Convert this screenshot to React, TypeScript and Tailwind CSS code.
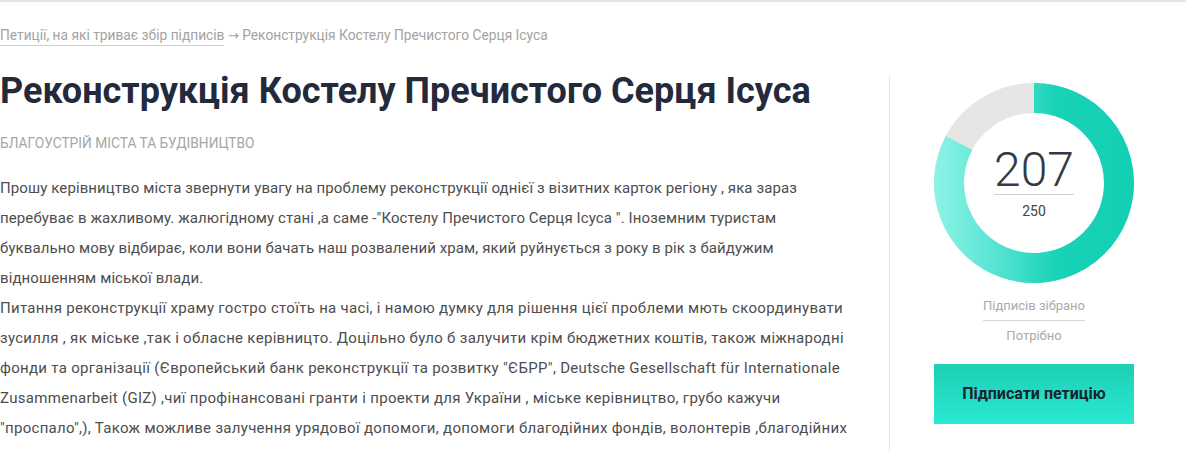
import React from "react";

const para1 = [
  "Прошу керівництво міста звернути увагу на проблему реконструкції однієї з візитних карток регіону , яка зараз",
  "перебуває в жахливому. жалюгідному стані ,а саме -\"Костелу Пречистого Серця Ісуса \". Іноземним туристам",
  "буквально мову відбирає, коли вони бачать наш розвалений храм, який руйнується з року в рік з байдужим",
  "відношенням міської влади.",
];
const para2 = [
  "Питання реконструкції храму гостро стоїть на часі, і намою думку для рішення цієї проблеми мють скоординувати",
  "зусилля , як міське ,так і обласне керівницто. Доцільно було б залучити крім бюджетних коштів, також міжнародні",
  "фонди та організації (Європейський банк реконструкції та розвитку \"ЄБРР\", Deutsche Gesellschaft für Internationale",
  "Zusammenarbeit (GIZ) ,чиї профінансовані гранти і проекти для України , міське керівництво, грубо кажучи",
  "\"проспало\",), Також можливе залучення урядової допомоги, допомоги благодійних фондів, волонтерів ,благодійних",
  "організацій та просто небайдужих людей, які бажають зберегти історичну пам'ятку для наступних поколінь.",
];

function Donut() {
  return (
    <div className="relative w-[200px] h-[200px]">
      <svg width="200" height="200" viewBox="0 0 200 200" className="block">
        <defs>
          <linearGradient id="g" x1="0" y1="0" x2="200" y2="0" gradientUnits="userSpaceOnUse">
            <stop offset="0" stopColor="#8ef3e6" />
            <stop offset="0.35" stopColor="#4fe2cf" />
            <stop offset="0.62" stopColor="#17d2b7" />
            <stop offset="1" stopColor="#13cfb4" />
          </linearGradient>
        </defs>
        <circle cx="100" cy="100" r="85" fill="none" stroke="#e6e6e6" strokeWidth="30" />
        <path d="M 100 15 A 85 85 0 1 1 25.01 59.99" fill="none" stroke="url(#g)" strokeWidth="30" />
      </svg>
      <div className="absolute inset-0 flex flex-col items-center justify-center">
        <div className="inline-block border-b border-[#d0d0d0] text-[48px] leading-[48px] font-light text-[#333a44]">207</div>
        <div className="mt-[6px] text-[14px] leading-[20px] text-[#444]">250</div>
      </div>
    </div>
  );
}

export default function App() {
  return (
    <div
      className="w-[1188px] h-[451px] overflow-hidden bg-white"
      style={{ fontFamily: "Roboto, 'Noto Sans', 'Liberation Sans', sans-serif" }}
    >
      <div className="w-[1186px] h-[2px] bg-[#e4e4ea]" />
      <div className="pt-[23px] text-[13.75px] leading-[20px] text-[#a3a3a3] whitespace-nowrap">
        <span className="inline-block border-b border-[#cfcfcf] leading-[19px]">Петиції, на які триває збір підписів</span>
        <span> </span>
        <span className="font-['DejaVu_Sans',sans-serif] text-[13px]">→</span>
        <span> Реконструкція Костелу Пречистого Серця Ісуса</span>
      </div>
      <div className="flex mt-[30px]">
        <div className="w-[889px] shrink-0">
          <h1 className="text-[36px] leading-[30px] font-bold text-[#232a3b] whitespace-nowrap">
            Реконструкція Костелу Пречистого Серця Ісуса
          </h1>
          <div className="mt-[27px] text-[13.75px] leading-[20px] text-[#a6a6a6] uppercase">
            Благоустрій міста та будівництво
          </div>
          <div className="mt-[20px] text-[15px] leading-[30px] text-[#4d4d4d] whitespace-nowrap">
            <div className="tracking-[0.1px]">
              {para1.map((l, i) => (
                <div key={i}>{l}</div>
              ))}
            </div>
            <div className="tracking-[0.3px]">
              {para2.map((l, i) => (
                <div key={i}>{l}</div>
              ))}
            </div>
          </div>
        </div>
        <div className="w-[289px] shrink-0 border-l border-[#e3e3e3] pt-[7px] flex flex-col items-center h-[400px]">
          <Donut />
          <div className="mt-[13px] inline-block border-b border-[#d6d6d6] pb-[4px] text-[13px] leading-[20px] text-[#aaaaaa]">
            Підписів зібрано
          </div>
          <div className="mt-[5px] text-[13px] leading-[20px] text-[#aaaaaa]">Потрібно</div>
          <button className="mt-[18px] w-[200px] h-[60px] bg-gradient-to-b from-[#1ccfb5] to-[#2be9d2] text-[16px] font-bold text-[#17232f]">
            Підписати петицію
          </button>
        </div>
      </div>
    </div>
  );
}
